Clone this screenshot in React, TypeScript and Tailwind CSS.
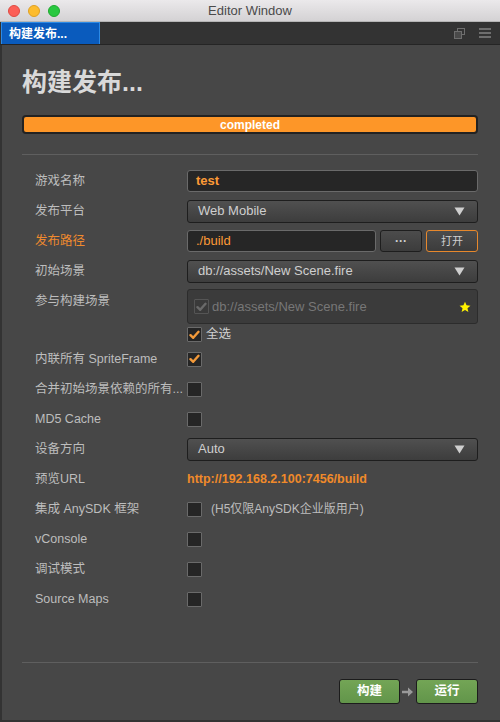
import React from "react";

const FONT = { fontFamily: '"Liberation Sans", "Noto Sans CJK SC", sans-serif' };

function Check({ checked = false, disabled = false }: { checked?: boolean; disabled?: boolean }) {
  return (
    <div
      className={
        "w-[15px] h-[15px] flex items-center justify-center border rounded-[1px] " +
        (disabled ? "border-[#555] bg-[#3a3a3a]" : "border-[#6a6a6a] bg-[#252525]")
      }
    >
      {checked && (
        <svg width="11" height="10" viewBox="0 0 11 10">
          <path
            d="M1.5 5.2 L4.2 7.8 L9.5 1.8"
            fill="none"
            stroke={disabled ? "#6a6a6a" : "#f39a3a"}
            strokeWidth="2.4"
            strokeLinecap="round"
            strokeLinejoin="round"
          />
        </svg>
      )}
    </div>
  );
}

function Select({ value }: { value: string }) {
  return (
    <div className="h-[23px] w-full flex items-center justify-between px-[10px] rounded-[3px] border border-[#1e1e1e] bg-gradient-to-b from-[#505050] to-[#3d3d3d] text-[13px] text-[#cfcfcf]">
      <span>{value}</span>
      <svg width="11" height="9" viewBox="0 0 11 9" className="mr-[2px]">
        <path d="M0.5 0.5 H10.5 L5.5 8.5 Z" fill="#cfcfcf" />
      </svg>
    </div>
  );
}

function Row({
  label,
  labelClass = "text-[#bdbdbd]",
  children,
}: {
  label: string;
  labelClass?: string;
  children?: React.ReactNode;
}) {
  return (
    <div className="h-[30px] flex items-center">
      <div className={"w-[165px] pl-[13px] text-[12.5px] whitespace-nowrap " + labelClass}>{label}</div>
      <div className="flex-1 flex items-center">{children}</div>
    </div>
  );
}

export default function App() {
  return (
    <div className="w-[500px] h-[722px] flex flex-col bg-[#474747]" style={FONT}>
      {/* title bar */}
      <div className="h-[22px] flex items-center relative bg-gradient-to-b from-[#ebe9eb] to-[#d4d2d4] border-b border-[#b5b5b5]">
        <div className="flex items-center gap-[8px] pl-[8px]">
          <div className="w-[12px] h-[12px] rounded-full bg-[#fc5f57] border border-[#df4a42]" />
          <div className="w-[12px] h-[12px] rounded-full bg-[#fdbc2e] border border-[#dfa023]" />
          <div className="w-[12px] h-[12px] rounded-full bg-[#29c840] border border-[#1fa92f]" />
        </div>
        <div className="absolute inset-0 flex items-center justify-center text-[13px] text-[#4a4a4a]">
          Editor Window
        </div>
      </div>

      {/* tab bar */}
      <div className="h-[23px] flex items-stretch justify-between bg-[#333333] border-b border-[#252525]">
        <div className="w-[99px] ml-[1px] flex items-center pl-[7px] bg-[#0a5bbd] border border-[#2c8ae6] border-b-0 text-white text-[12px] font-bold">
          构建发布...
        </div>
        <div className="flex items-center gap-[14px] pr-[9px]">
          <svg width="11" height="11" viewBox="0 0 11 11">
            <rect x="3.5" y="0.5" width="7" height="6" fill="none" stroke="#6e6e6e" />
            <rect x="0.5" y="3.5" width="7" height="7" fill="#4a4a4a" stroke="#6e6e6e" />
          </svg>
          <svg width="12" height="10" viewBox="0 0 12 10">
            <rect x="0" y="0" width="12" height="2" fill="#6e6e6e" />
            <rect x="0" y="4" width="12" height="2" fill="#6e6e6e" />
            <rect x="0" y="8" width="12" height="2" fill="#6e6e6e" />
          </svg>
        </div>
      </div>

      {/* content */}
      <div className="flex-1 flex flex-col border-l-2 border-[#333] border-b-2 pl-[20px] pr-[22px]">
        <div className="pt-[22px] text-[25px] font-bold text-[#d9d9d9] leading-[30px]">构建发布...</div>

        <div className="mt-[18px] h-[19px] rounded-[4px] border-2 border-[#222] bg-[#fd9628] flex items-center justify-center text-white text-[12px] font-bold">
          completed
        </div>

        <div className="mt-[20px] h-px bg-[#5f5f5f]" />

        <div className="mt-[11px] flex flex-col">
          <Row label="游戏名称">
            <div className="h-[22px] w-full flex items-center px-[8px] rounded-[3px] border border-[#6a6a6a] bg-[#262626] text-[13px] text-[#fd9a36] font-bold">
              test
            </div>
          </Row>
          <Row label="发布平台">
            <Select value="Web Mobile" />
          </Row>
          <Row label="发布路径" labelClass="text-[#f08a2e]">
            <div className="w-full flex items-center gap-[4px]">
              <div className="h-[22px] flex-1 flex items-center px-[8px] rounded-[3px] border border-[#6a6a6a] bg-[#262626] text-[13px] text-[#fd9a36]">
                ./build
              </div>
              <div className="h-[22px] w-[42px] flex items-center justify-center rounded-[3px] border border-[#1e1e1e] bg-gradient-to-b from-[#4c4c4c] to-[#3c3c3c] text-[12px] text-[#d0d0d0] font-bold leading-none">
                ···
              </div>
              <div className="h-[22px] w-[52px] flex items-center justify-center rounded-[3px] border border-[#e7882c] bg-gradient-to-b from-[#4c4c4c] to-[#3c3c3c] text-[11px] text-[#d0d0d0]">
                打开
              </div>
            </div>
          </Row>
          <Row label="初始场景">
            <Select value="db://assets/New Scene.fire" />
          </Row>

          {/* scene list */}
          <div className="flex items-start mt-[3px]">
            <div className="w-[165px] pl-[13px] pt-[3px] text-[12.5px] text-[#bdbdbd]">参与构建场景</div>
            <div className="flex-1 flex flex-col">
              <div className="h-[35px] flex items-center justify-between pl-[6px] pr-[6px] rounded-[3px] border border-[#2c2c2c] bg-[#3b3b3b]">
                <div className="flex items-center gap-[3px]">
                  <Check checked disabled />
                  <span className="text-[13px] text-[#777]">db://assets/New Scene.fire</span>
                </div>
                <svg width="12" height="12" viewBox="0 0 24 24">
                  <path
                    d="M12 1.5l3.1 7.2 7.8.6-6 5.1 1.9 7.6L12 17.9 5.2 22l1.9-7.6-6-5.1 7.8-.6z"
                    fill="#fff200"
                  />
                </svg>
              </div>
              <div className="h-[19px] flex items-center gap-[4px] mt-[1px]">
                <Check checked />
                <span className="text-[12.5px] text-[#d0d0d0]">全选</span>
              </div>
            </div>
          </div>

          <Row label="内联所有 SpriteFrame">
            <Check checked />
          </Row>
          <Row label="合并初始场景依赖的所有...">
            <Check />
          </Row>
          <Row label="MD5 Cache">
            <Check />
          </Row>
          <Row label="设备方向">
            <Select value="Auto" />
          </Row>
          <Row label="预览URL">
            <span className="text-[12.5px] font-bold text-[#f08a2a]">http://192.168.2.100:7456/build</span>
          </Row>
          <Row label="集成 AnySDK 框架">
            <Check />
            <span className="ml-[9px] text-[12px] text-[#bdbdbd]">(H5仅限AnySDK企业版用户)</span>
          </Row>
          <Row label="vConsole">
            <Check />
          </Row>
          <Row label="调试模式">
            <Check />
          </Row>
          <Row label="Source Maps">
            <Check />
          </Row>
        </div>

        <div className="flex-1" />
        <div className="h-px bg-[#5f5f5f]" />
        <div className="h-[57px] flex items-start justify-end pt-[16px]">
          <div className="flex items-center">
            <div className="w-[61px] h-[25px] flex items-center justify-center rounded-[3px] border border-[#1c1c1c] bg-gradient-to-b from-[#73a556] to-[#62954a] text-white text-[12.5px] font-bold">
              构建
            </div>
            <svg width="14" height="12" viewBox="0 0 14 12" className="mx-[1px]">
              <path d="M1 6 H9" stroke="#9a9a9a" strokeWidth="2.5" />
              <path d="M7 1.5 L12 6 L7 10.5 Z" fill="#9a9a9a" />
            </svg>
            <div className="w-[62px] h-[25px] flex items-center justify-center rounded-[3px] border border-[#1c1c1c] bg-gradient-to-b from-[#73a556] to-[#62954a] text-white text-[12.5px] font-bold">
              运行
            </div>
          </div>
        </div>
      </div>
    </div>
  );
}
